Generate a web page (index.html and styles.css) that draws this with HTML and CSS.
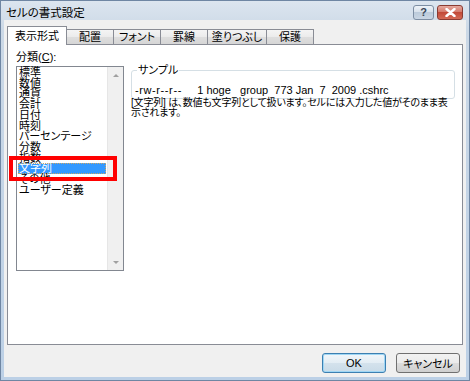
FILE: index.html
```html
<!DOCTYPE html>
<html lang="ja">
<head>
    <meta charset="UTF-8">
    <title>セルの書式設定</title>
    <link rel="stylesheet" href="styles.css">
</head>
<body>
    <div class="window">
        <div class="titlebar">
            <span class="title">セルの書式設定</span>
            <div class="caption-buttons">
                <span class="cap help">?</span>
                <span class="cap close">
                    <svg width="11" height="9" viewBox="0 0 11 9">
                        <path d="M1.5 1 L9.5 8 M9.5 1 L1.5 8" stroke="#fff" stroke-width="2.4" stroke-linecap="round"/>
                    </svg>
                </span>
            </div>
        </div>

        <div class="client">
            <div class="tabs">
                <div class="tab wide active">表示形式</div>
                <div class="tab">配置</div>
                <div class="tab">フォント</div>
                <div class="tab">罫線</div>
                <div class="tab wide">塗りつぶし</div>
                <div class="tab">保護</div>
            </div>

            <div class="panel">
                <div class="category">
                    <div class="label">分類(<u>C</u>):</div>
                    <div class="listbox">
                        <ul class="items">
                            <li>標準</li>
                            <li>数値</li>
                            <li>通貨</li>
                            <li>会計</li>
                            <li>日付</li>
                            <li>時刻</li>
                            <li>パーセンテージ</li>
                            <li>分数</li>
                            <li>指数</li>
                            <li class="selected">文字列</li>
                            <li>その他</li>
                            <li>ユーザー定義</li>
                        </ul>
                        <div class="scrollbar">
                            <span class="arrow up"></span>
                            <span class="arrow down"></span>
                        </div>
                    </div>
                </div>

                <div class="details">
                    <fieldset class="sample">
                        <legend>サンプル</legend>
                        <div class="sample-text"><span class="perms">-rw-r--r--</span>     1 hoge   group  773 Jan  7  2009 .cshrc</div>
                    </fieldset>
                    <p class="desc">[文字列] は、数値も文字列として扱います。セルには入力した値がそのまま表示されます。</p>
                </div>
            </div>

            <div class="button-row">
                <button class="btn default">OK</button>
                <button class="btn">キャンセル</button>
            </div>
        </div>

        <!-- annotation frame around the selected item -->
        <div class="highlight-box"></div>
    </div>
</body>
</html>
```

FILE: styles.css
```css
body {
    margin: 0;
    font-family: 'Liberation Sans', 'Noto Sans CJK JP', sans-serif;
    font-size: 11px;
    color: #000;
    background-color: #fff;
}

.window {
    position: relative;
    box-sizing: border-box;
    width: 470px;
    height: 381px;
    border: 1px solid #6f86a3;
    background: linear-gradient(#dce5ef, #cbd8e6 30px, #bcd0e6);
    display: flex;
    flex-direction: column;
}

.titlebar {
    height: 19px;
    display: flex;
    align-items: center;
    justify-content: space-between;
    padding: 0 6px 0 5px;
}

.title {
    font-size: 11.5px;
    font-feature-settings: "palt";
    margin-top: 2px;
}

.caption-buttons {
    display: flex;
    gap: 3px;
    margin-top: 3px;
}

.cap {
    box-sizing: border-box;
    height: 15px;
    border-radius: 3px;
    display: flex;
    align-items: center;
    justify-content: center;
}

.help {
    width: 21px;
    border: 1px solid #7d8ea3;
    background: linear-gradient(#eef3f8, #d5dfea 50%, #bccbdb 50%, #c9d6e4);
    color: #3a4656;
    font-size: 11px;
    font-weight: bold;
}

.close {
    width: 26px;
    border: 1px solid #8a3b32;
    background: linear-gradient(#e6a99f, #d27566 50%, #c24a38 50%, #d46a56);
}

.client {
    flex: 1;
    margin: 0 3px 3px 3px;
    padding: 6px 3px 4px 3px;
    background-color: #f0f0f0;
    display: flex;
    flex-direction: column;
}

.tabs {
    display: flex;
    align-items: flex-end;
    height: 18px;
    font-feature-settings: "palt";
}

.tab {
    box-sizing: border-box;
    width: 48px;
    height: 15px;
    line-height: 14px;
    text-align: center;
    border: 1px solid #898c95;
    border-bottom: none;
    margin-left: -1px;
    background: linear-gradient(#f4f4f4, #ebebeb 50%, #dedede 50%, #d6d6d6);
}

.tab.wide {
    width: 60px;
}

.tab.active {
    position: relative;
    z-index: 1;
    height: 19px;
    line-height: 18px;
    margin: 0 0 -1px 0;
    background: #fff;
}

.panel {
    box-sizing: border-box;
    height: 301px;
    border: 1px solid #898c95;
    background-color: #fff;
    display: flex;
    padding: 6px 0 0 8px;
    gap: 7px;
}

.label {
    height: 12px;
    line-height: 12px;
    font-feature-settings: "palt";
}

.listbox {
    box-sizing: border-box;
    width: 108px;
    height: 205px;
    margin-top: 3px;
    border: 1px solid #828790;
    display: flex;
}

.items {
    flex: 1;
    list-style: none;
    margin: 0;
    padding: 0 1px;
    line-height: 10.7px;
    font-feature-settings: "palt";
}

.items li {
    padding-left: 1px;
}

.items li.selected {
    background-color: #3399ff;
    color: #fff;
    outline: 1px dotted #c9a86a;
    outline-offset: -1px;
}

.scrollbar {
    width: 15px;
    background-color: #f0f0f0;
    border-left: 1px solid #e6e6e6;
    display: flex;
    flex-direction: column;
    justify-content: space-between;
    align-items: center;
    padding: 7px 0 6px;
}

.arrow {
    width: 0;
    height: 0;
    border-left: 3px solid transparent;
    border-right: 3px solid transparent;
}

.arrow.up {
    border-bottom: 3px solid #a0a0a0;
}

.arrow.down {
    border-top: 3px solid #a0a0a0;
}

.details {
    width: 324px;
    padding-top: 13px;
}

.sample {
    margin: 0;
    padding: 8px 3px 2px;
    border: 1px solid #d5dfe5;
    border-radius: 3px;
    min-width: 0;
}

.sample legend {
    padding: 0 1px;
    margin-left: 2px;
    height: 12px;
    line-height: 12px;
    font-feature-settings: "palt";
}

.sample-text {
    white-space: pre;
    height: 12px;
    line-height: 12px;
}

.perms {
    letter-spacing: 0.6px;
}

.desc {
    margin: -1px 0 0;
    font-size: 10px;
    line-height: 10px;
    letter-spacing: -0.2px;
    font-feature-settings: "palt";
}

.button-row {
    display: flex;
    justify-content: flex-end;
    gap: 10px;
    padding: 8px 3px 0 0;
}

.btn {
    box-sizing: border-box;
    width: 64px;
    height: 20px;
    padding: 0;
    font-family: inherit;
    font-size: 11px;
    font-feature-settings: "palt";
    color: #000;
    border: 1px solid #707070;
    border-radius: 3px;
    background: linear-gradient(#f2f2f2, #ebebeb 50%, #dddddd 50%, #cfcfcf);
}

.btn.default {
    border-color: #3c7fb1;
    box-shadow: inset 0 0 0 1px #9fd6f4;
    background: linear-gradient(#f1f6fa, #e3edf4 50%, #d4e2ec 50%, #c9dbe8);
}

.highlight-box {
    position: absolute;
    left: 8px;
    top: 155px;
    width: 108px;
    height: 25px;
    box-sizing: border-box;
    border: 4px solid #f00;
}
```
